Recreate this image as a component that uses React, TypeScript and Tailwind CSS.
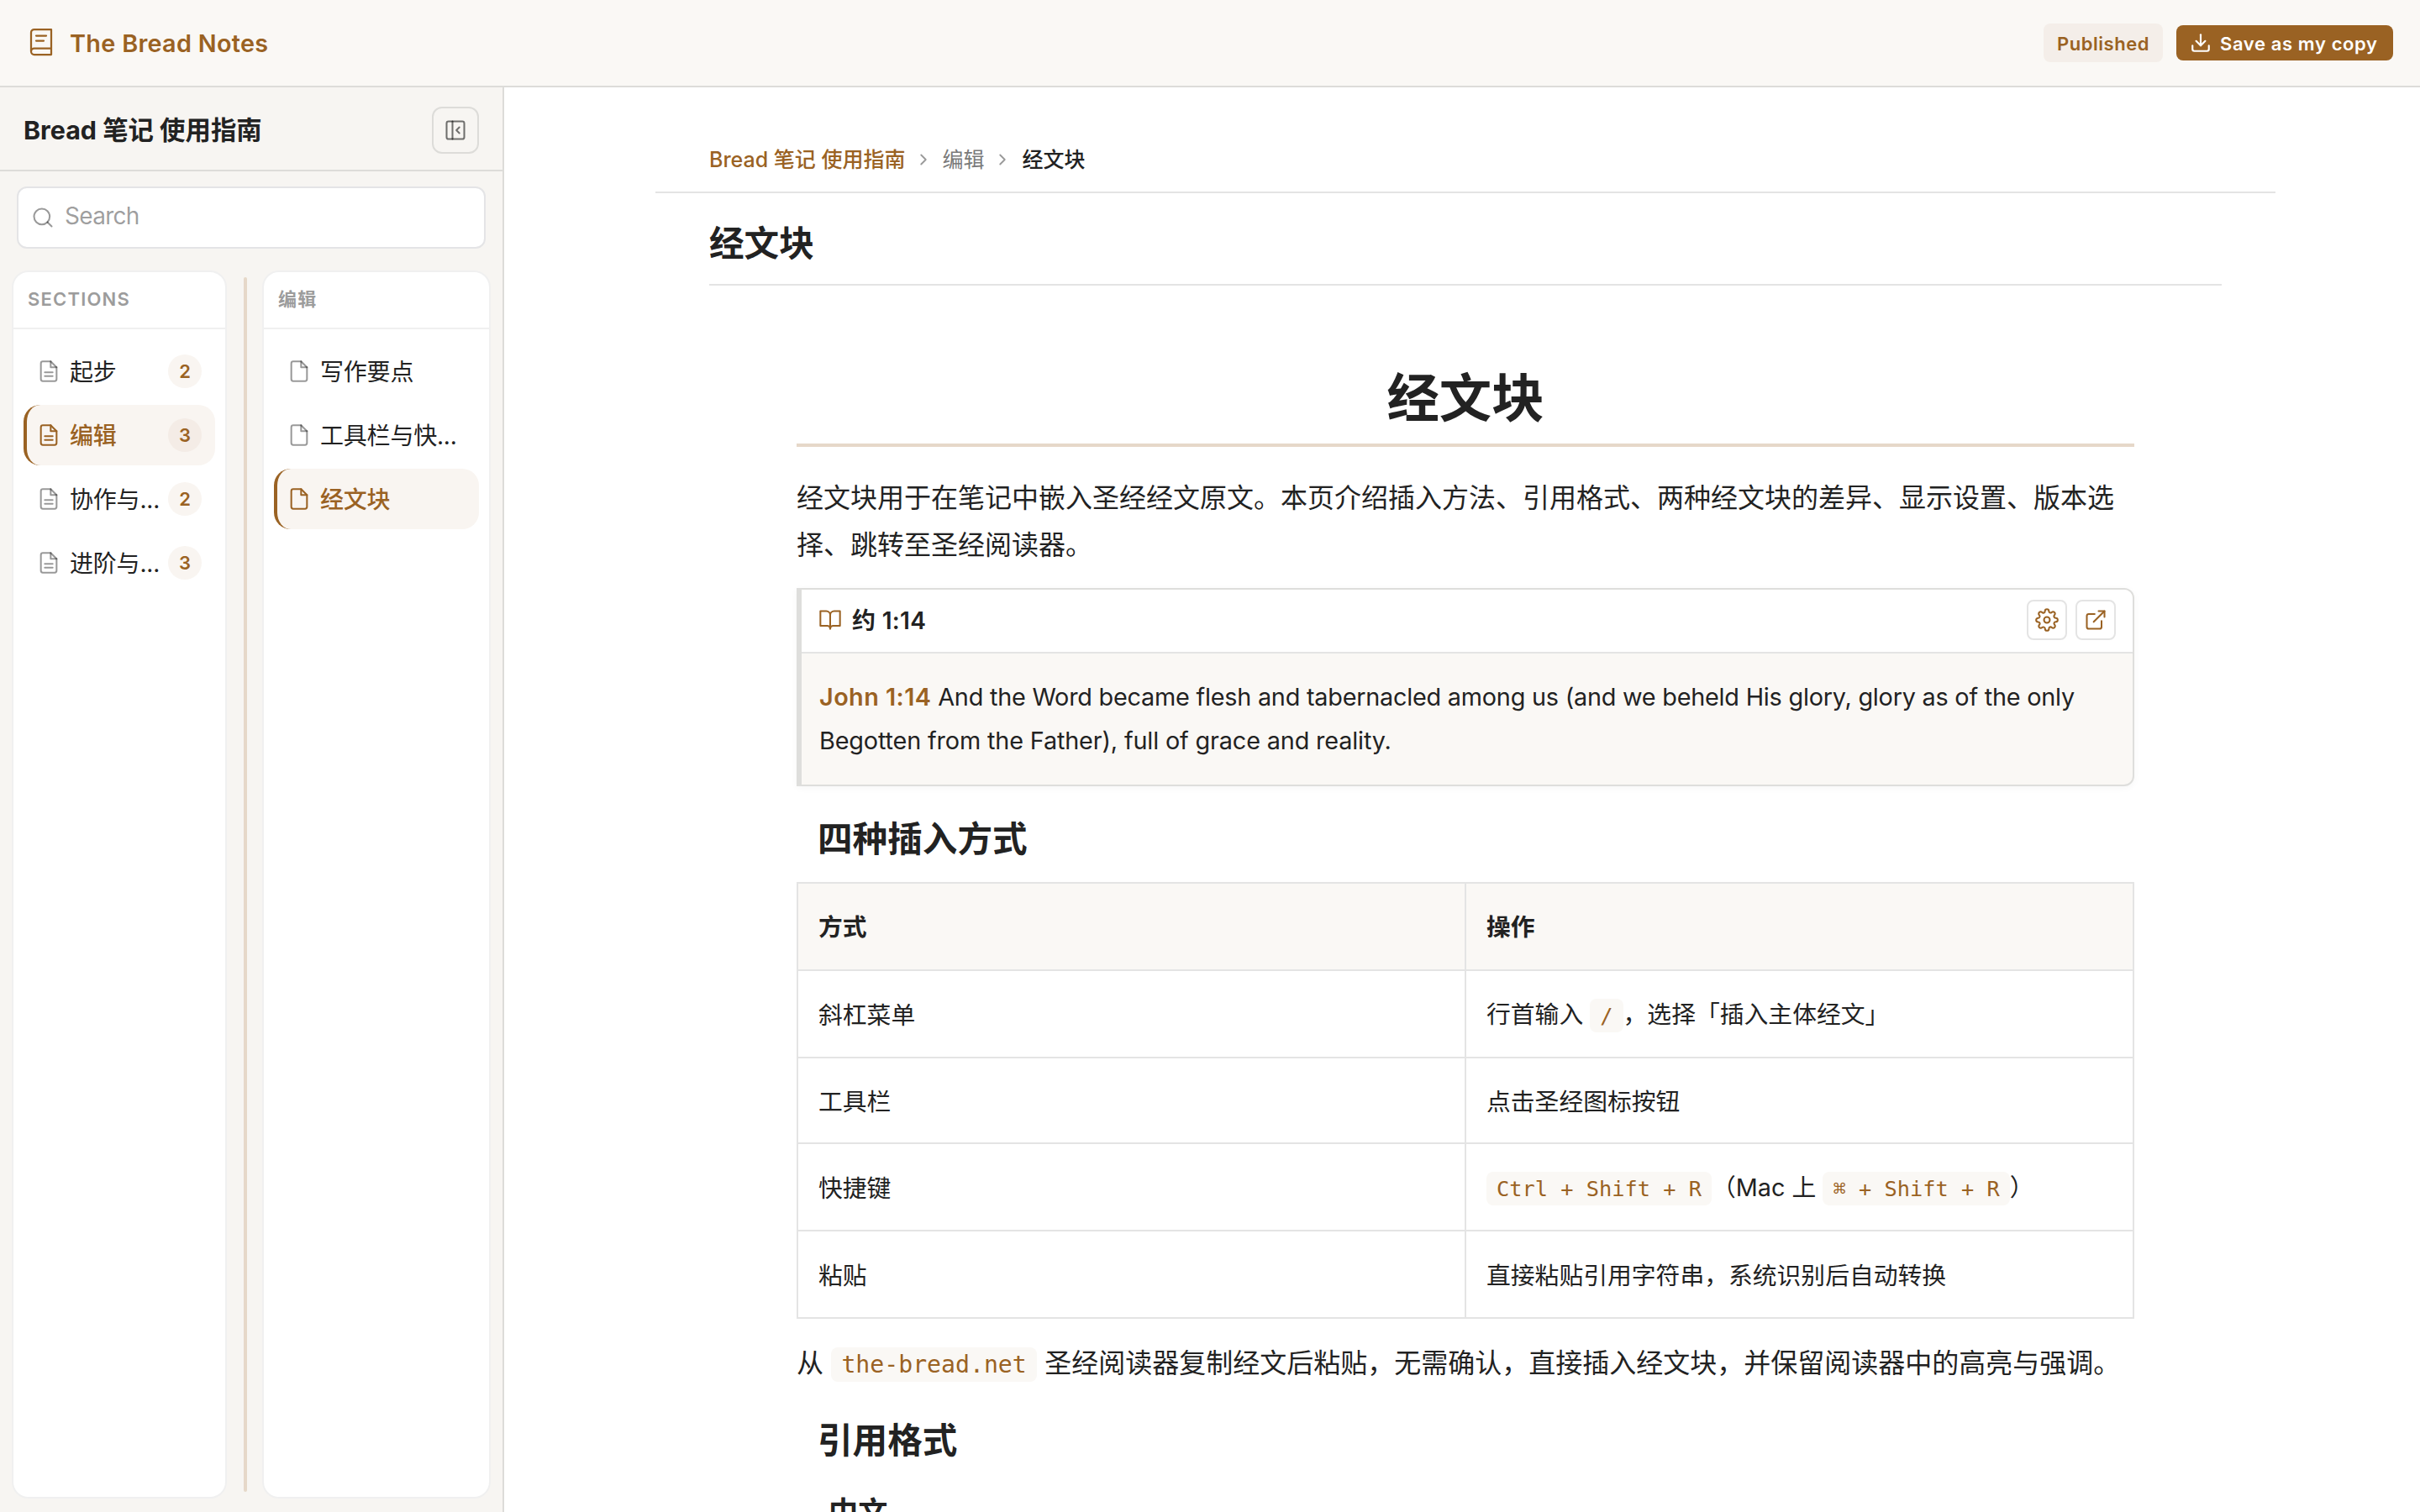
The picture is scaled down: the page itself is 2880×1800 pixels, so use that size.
import type { ReactNode } from 'react';
import clsx from 'clsx';
import { ChevronRight, PanelLeftClose, Search } from 'lucide-react';

interface NavItem {
  title: string;
  count?: number;
  active?: boolean;
}

const sections: NavItem[] = [
  { title: '起步', count: 2 },
  { title: '编辑', count: 3, active: true },
  { title: '协作与...', count: 2 },
  { title: '进阶与...', count: 3 },
];

const pages: NavItem[] = [
  { title: '写作要点' },
  { title: '工具栏与快...' },
  { title: '经文块', active: true },
];

// Icons

interface IconProps {
  size?: number;
  strokeWidth?: number;
  className?: string;
  children?: ReactNode;
}

function Icon({ size = 28, strokeWidth = 1.75, className, children }: IconProps) {
  return (
    <svg
      width={size}
      height={size}
      viewBox="0 0 24 24"
      fill="none"
      stroke="currentColor"
      strokeWidth={strokeWidth}
      strokeLinecap="round"
      strokeLinejoin="round"
      className={clsx('shrink-0', className)}
    >
      {children}
    </svg>
  );
}

function LogoIcon() {
  return (
    <Icon size={36} strokeWidth={1.5} className="-mt-0.5 -ml-px">
      <path d="M4 19.5V4.5A2.5 2.5 0 0 1 6.5 2H20v20H6.5A2.5 2.5 0 0 1 4 19.5A2.5 2.5 0 0 1 6.5 17H20" />
      <path d="M8 7h8" />
      <path d="M8 11h6" />
    </Icon>
  );
}

function FileIcon({ lines }: { lines?: boolean }) {
  return (
    <Icon>
      <path d="M14 2H6a2 2 0 0 0-2 2v16a2 2 0 0 0 2 2h12a2 2 0 0 0 2-2V8z" />
      <path d="M14 2v6h6" />
      {lines && <path d="M16 13H8M16 17H8" />}
    </Icon>
  );
}

function DownloadIcon() {
  return (
    <Icon size={26} strokeWidth={2}>
      <path d="M21 15v4a2 2 0 0 1-2 2H5a2 2 0 0 1-2-2v-4" />
      <path d="M7 10l5 5 5-5" />
      <path d="M12 15V3" />
    </Icon>
  );
}

function BookIcon() {
  return (
    <Icon className="text-[#9a6223]">
      <path d="M2 3h6a4 4 0 0 1 4 4v14a3 3 0 0 0-3-3H2z" />
      <path d="M22 3h-6a4 4 0 0 0-4 4v14a3 3 0 0 1 3-3h7z" />
    </Icon>
  );
}

function GearIcon() {
  return (
    <Icon>
      <circle cx="12" cy="12" r="3" />
      <path d="M19.4 15a1.65 1.65 0 0 0 .33 1.82l.06.06a2 2 0 0 1 0 2.83 2 2 0 0 1-2.83 0l-.06-.06a1.65 1.65 0 0 0-1.82-.33 1.65 1.65 0 0 0-1 1.51V21a2 2 0 0 1-2 2 2 2 0 0 1-2-2v-.09A1.65 1.65 0 0 0 9 19.4a1.65 1.65 0 0 0-1.82.33l-.06.06a2 2 0 0 1-2.83 0 2 2 0 0 1 0-2.83l.06-.06a1.65 1.65 0 0 0 .33-1.82 1.65 1.65 0 0 0-1.51-1H3a2 2 0 0 1-2-2 2 2 0 0 1 2-2h.09A1.65 1.65 0 0 0 4.6 9a1.65 1.65 0 0 0-.33-1.82l-.06-.06a2 2 0 0 1 0-2.83 2 2 0 0 1 2.83 0l.06.06a1.65 1.65 0 0 0 1.82.33H9a1.65 1.65 0 0 0 1-1.51V3a2 2 0 0 1 2-2 2 2 0 0 1 2 2v.09a1.65 1.65 0 0 0 1 1.51 1.65 1.65 0 0 0 1.82-.33l.06-.06a2 2 0 0 1 2.83 0 2 2 0 0 1 0 2.83l-.06.06a1.65 1.65 0 0 0-.33 1.82V9a1.65 1.65 0 0 0 1.51 1H21a2 2 0 0 1 2 2 2 2 0 0 1-2 2h-.09a1.65 1.65 0 0 0-1.51 1z" />
    </Icon>
  );
}

function ExternalIcon() {
  return (
    <Icon>
      <path d="M18 13v6a2 2 0 0 1-2 2H5a2 2 0 0 1-2-2V8a2 2 0 0 1 2-2h6" />
      <path d="M15 3h6v6" />
      <path d="M10 14L21 3" />
    </Icon>
  );
}

// Top bar

function TopBar() {
  return (
    <header className="flex h-[104px] shrink-0 items-center justify-between border-b-2 border-[#dddcd9] bg-[#faf8f5] px-8 text-[#9a6223]">
      <div className="flex items-center gap-4">
        <LogoIcon />
        <span className="pt-0.5 text-[28.8px] leading-9 font-semibold tracking-[0.3px]">The Bread Notes</span>
      </div>
      <div className="flex items-center gap-4">
        <span className="flex h-[46px] w-[142px] items-center justify-center rounded-lg bg-[#f4eee9] pt-0.5 text-[22px] font-semibold tracking-[0.55px]">
          Published
        </span>
        <button className="flex h-[42px] w-[258px] items-center gap-2.5 rounded-lg bg-[#9a6223] px-4 text-[22px] font-semibold tracking-[0.62px] whitespace-nowrap text-white">
          <DownloadIcon />
          <span className="pt-0.5">Save as my copy</span>
        </button>
      </div>
    </header>
  );
}

// Sidebar

function NavRow({ item, lines }: { item: NavItem; lines?: boolean }) {
  return (
    <li
      className={clsx(
        'flex h-[72px] items-center rounded-[20px] border-l-4 pr-4 pl-3',
        item.active ? 'border-[#9a6223] bg-[#f9f5f1] font-medium text-[#9a6223]' : 'border-transparent text-[#222]'
      )}
    >
      <span className={item.active ? 'text-[#9a6223]' : 'text-black/40'}>
        <FileIcon lines={lines} />
      </span>
      <span className="ml-[11px] w-0 flex-1 pt-0.5 text-[28px] leading-10 tracking-[-0.2px] whitespace-nowrap">{item.title}</span>
      {item.count && (
        <span
          className={clsx(
            'flex size-10 shrink-0 items-center justify-center rounded-full text-[22px] font-semibold text-[#9a6223]',
            item.active ? 'bg-[#f4ece6]' : 'bg-[#f9f5f1]'
          )}
        >
          {item.count}
        </span>
      )}
    </li>
  );
}

function NavPanel({ title, items, lines, className }: { title: string; items: NavItem[]; lines?: boolean; className: string }) {
  return (
    <section className={clsx('flex flex-col rounded-[20px] border-2 border-[#f0f0f0] bg-white', className)}>
      <h3 className="flex h-[68px] items-center border-b-2 border-[#f0f0f0] px-[17px] pb-0.5 text-[22px] font-semibold tracking-[1.2px] text-[#9c9c9c]">
        {title}
      </h3>
      <ul className="flex flex-col gap-1 px-3 pt-3.5">
        {items.map((item) => (
          <NavRow key={item.title} item={item} lines={lines} />
        ))}
      </ul>
    </section>
  );
}

function Sidebar() {
  return (
    <aside className="flex w-[600px] shrink-0 flex-col border-r-2 border-[#dddcd9] bg-[#f7f5f2]">
      <div className="flex h-[100px] shrink-0 items-center justify-between border-b-2 border-[#dddcd9] px-7 pt-1">
        <h2 className="text-[30.4px] leading-10 font-bold text-[#222]">Bread 笔记 使用指南</h2>
        <button className="flex size-14 items-center justify-center rounded-xl border-2 border-[#dddcd9] text-black/55">
          <PanelLeftClose size={28} strokeWidth={1.75} />
        </button>
      </div>
      <div className="mx-5 mt-[18px] flex h-[74px] shrink-0 items-center gap-3 rounded-xl border-2 border-[#e4e4e6] bg-white px-[15px] text-black/40">
        <Search size={28} strokeWidth={1.75} />
        <span className="-mt-1 text-[28px] leading-9 tracking-[-0.7px]">Search</span>
      </div>
      <div className="mt-[26px] mb-4 flex min-h-0 flex-1 px-3.5">
        <NavPanel title="SECTIONS" items={sections} lines className="w-[256px]" />
        <div className="my-2 mr-[18px] ml-5 w-1 rounded-full bg-[#e6d8c9]" />
        <NavPanel title="编辑" items={pages} className="w-[272px]" />
      </div>
    </aside>
  );
}

// Article

function Code({ children, large }: { children: ReactNode; large?: boolean }) {
  return (
    <code
      className={clsx(
        "rounded-lg bg-[#faf8f5] font-['DejaVu_Sans_Mono',monospace] text-[#9a6223]",
        large ? 'px-[12.4px] py-[3.6px] text-[28.16px]' : 'px-3 py-[5.2px] text-[25.34px]'
      )}
    >
      {children}
    </code>
  );
}

function VerseCard() {
  return (
    <div className="mt-[23px] h-[236px] overflow-hidden rounded-r-xl border-2 border-l-[6px] border-[#dededc] bg-[#faf8f5] shadow-[0_2px_8px_rgba(0,0,0,0.04)]">
      <div className="flex h-[76px] items-center border-b-2 border-[#e4e4e4] bg-white px-5 pb-0.5">
        <BookIcon />
        <span className="ml-3 flex-1 pt-0.5 text-[28px] leading-9 font-semibold tracking-[0.3px]">约 1:14</span>
        <div className="flex gap-2.5 text-[#9a6223]">
          <button className="flex size-12 items-center justify-center rounded-lg border-2 border-[#e4e4e4]">
            <GearIcon />
          </button>
          <button className="flex size-12 items-center justify-center rounded-lg border-2 border-[#e4e4e4]">
            <ExternalIcon />
          </button>
        </div>
      </div>
      <p className="px-[21px] pt-[26px] text-[28.8px] leading-[51.84px] tracking-[-0.22px]">
        <strong className="font-semibold tracking-[0.45px] text-[#9a6223]">John 1:14 </strong>
        And the Word became flesh and tabernacled among us (and we beheld His glory, glory as of the only
        <br />
        <span className="tracking-[-0.14px]">Begotten from the Father), full of grace and reality.</span>
      </p>
    </div>
  );
}

const rows: { method: string; action: ReactNode }[] = [
  {
    method: '斜杠菜单',
    action: (
      <>
        行首输入 <Code>/</Code>，选择「插入主体经文」
      </>
    ),
  },
  { method: '工具栏', action: '点击圣经图标按钮' },
  {
    method: '快捷键',
    action: (
      <>
        <Code>Ctrl + Shift + R</Code>（Mac 上 <Code>⌘ + Shift + R</Code>）
      </>
    ),
  },
  { method: '粘贴', action: '直接粘贴引用字符串，系统识别后自动转换' },
];

function MethodTable() {
  return (
    <table className="mt-[23px] w-full table-fixed border-collapse text-left text-[28.8px] leading-[50px]">
      <thead>
        <tr className="h-[104px] bg-[#faf8f5]">
          <th className="border-2 border-[#e4e4e4] px-6 pt-0.5 font-bold">方式</th>
          <th className="border-2 border-[#e4e4e4] px-6 pt-0.5 font-bold">操作</th>
        </tr>
      </thead>
      <tbody>
        {rows.map((row) => (
          <tr key={row.method} className={row.method === '工具栏' ? 'h-[102px]' : 'h-[104px]'}>
            <td className="border-2 border-[#e4e4e4] px-6 pt-[3px]">{row.method}</td>
            <td className="border-2 border-[#e4e4e4] px-6 pt-[3px]">{row.action}</td>
          </tr>
        ))}
      </tbody>
    </table>
  );
}

function Breadcrumb() {
  return (
    <nav className="flex h-[126px] items-center border-b-2 border-[#e4e4e4] px-16 pt-[47px] text-[25px] leading-[38px]">
      <span className="font-medium text-[#9a6223]">Bread 笔记 使用指南</span>
      <ChevronRight size={22} className="mr-3 ml-2.5 text-[#999]" />
      <span className="text-[#7a7a7a]">编辑</span>
      <ChevronRight size={22} className="mr-[13px] ml-2.5 text-[#999]" />
      <span className="font-medium">经文块</span>
    </nav>
  );
}

export default function App() {
  return (
    <div
      lang="zh-CN"
      className="flex h-[1800px] w-[2880px] flex-col overflow-hidden bg-white font-['Inter','Noto_Sans_CJK_SC',sans-serif] text-[#222]"
    >
      <TopBar />
      <div className="flex min-h-0 flex-1">
        <Sidebar />
        <main className="min-w-0 flex-1 overflow-hidden pl-[180px]">
          <div className="w-[1928px]">
            <Breadcrumb />
            <h2 className="mx-16 h-[110px] border-b-2 border-[#e4e4e4] pt-[33px] text-[41.6px] leading-[54px] font-bold">经文块</h2>
            <article className="mx-[168px]">
              <h1 className="mt-[95px] border-b-4 border-[#e6d8c9] pb-[13px] text-center text-[62.4px] leading-[80px] font-bold">经文块</h1>
              <p className="mt-[33px] text-[32px] leading-[56px]">
                经文块用于在笔记中嵌入圣经经文原文。本页介绍插入方法、引用格式、两种经文块的差异、显示设置、版本选择、跳转至圣经阅读器。
              </p>
              <VerseCard />
              <h2 className="mt-[35px] ml-[25px] text-[41.6px] leading-[56px] font-bold">四种插入方式</h2>
              <MethodTable />
              <p className="mt-[25px] text-[32px] leading-[56px] whitespace-nowrap">
                从 <Code large>the-bread.net</Code> 圣经阅读器复制经文后粘贴，无需确认，直接插入经文块，并保留阅读器中的高亮与强调。
              </p>
              <h2 className="mt-[34px] ml-[25px] text-[41.6px] leading-[56px] font-bold">引用格式</h2>
              <h3 className="mt-[33px] ml-[38px] text-[35.2px] leading-[48px] font-bold">中文</h3>
            </article>
          </div>
        </main>
      </div>
    </div>
  );
}
